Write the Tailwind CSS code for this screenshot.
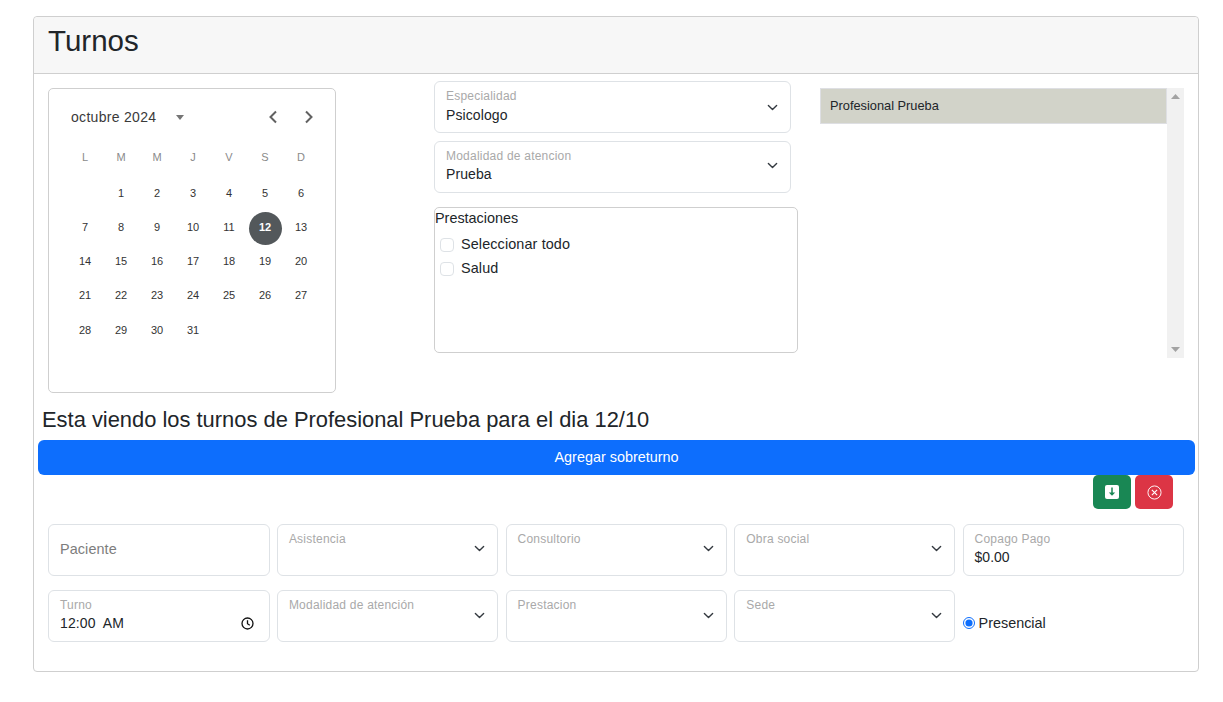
<!DOCTYPE html>
<html lang="es">
<head>
    <meta charset="UTF-8">
    <title>Turnos</title>
    <script src="https://cdn.jsdelivr.net/npm/@tailwindcss/browser@4"></script>
</head>
<body class="bg-white h-[702px] overflow-hidden font-['Liberation_Sans',Arial,sans-serif] text-[#212529]">
    <div class="ml-[33px] mt-[16px] w-[1166px] h-[656px] border border-[#cfcfcf] rounded-[4px]">
        <!-- Cabecera -->
        <div class="h-[57px] bg-[#f7f7f7] border-b border-[#cfcfcf] rounded-t-[4px] pl-[14px] pt-[6px]">
            <h1 class="text-[29.500px] leading-[36px]">Turnos</h1>
        </div>

        <!-- Fila superior -->
        <div class="flex h-[327px]">
            <!-- Calendario -->
            <div class="ml-[14px] mt-[14px] w-[288px] h-[305px] border border-[#cfcfcf] rounded-[5px] pl-[18px] shrink-0">
                <div class="flex items-center h-[18px] mt-[19px] text-[#3a3a3a]">
                    <span class="ml-[4px] text-[14px] tracking-[0.3px] w-[104px]">octubre 2024</span>
                    <svg class="w-[10px] h-[5px]" viewBox="0 0 10 5"><path d="M1 0h8L5 5z" fill="#757575"/></svg>
                    <svg class="ml-[83px] w-[10px] h-[14px]" viewBox="0 0 10 14" fill="none" stroke="#616161" stroke-width="2"><path d="M8 1.500 2.500 7 8 12.500"/></svg>
                    <svg class="ml-[26px] w-[10px] h-[14px]" viewBox="0 0 10 14" fill="none" stroke="#616161" stroke-width="2"><path d="M2 1.500 7.500 7 2 12.500"/></svg>
                </div>
                <div class="grid grid-cols-[repeat(7,36px)] mt-[14px] text-[11px] text-center text-[#333]">
                    <div class="h-[37px] leading-[36px] text-[#8a8a8a] -mt-[1px]">L</div>
                    <div class="h-[37px] leading-[36px] text-[#8a8a8a] -mt-[1px]">M</div>
                    <div class="h-[37px] leading-[36px] text-[#8a8a8a] -mt-[1px]">M</div>
                    <div class="h-[37px] leading-[36px] text-[#8a8a8a] -mt-[1px]">J</div>
                    <div class="h-[37px] leading-[36px] text-[#8a8a8a] -mt-[1px]">V</div>
                    <div class="h-[37px] leading-[36px] text-[#8a8a8a] -mt-[1px]">S</div>
                    <div class="h-[37px] leading-[36px] text-[#8a8a8a] -mt-[1px]">D</div>

                    <div class="h-[34px] leading-[34px]"></div>
                    <div class="h-[34px] leading-[34px]">1</div>
                    <div class="h-[34px] leading-[34px]">2</div>
                    <div class="h-[34px] leading-[34px]">3</div>
                    <div class="h-[34px] leading-[34px]">4</div>
                    <div class="h-[34px] leading-[34px]">5</div>
                    <div class="h-[34px] leading-[34px]">6</div>

                    <div class="h-[34px] leading-[34px]">7</div>
                    <div class="h-[34px] leading-[34px]">8</div>
                    <div class="h-[34px] leading-[34px]">9</div>
                    <div class="h-[34px] leading-[34px]">10</div>
                    <div class="h-[34px] leading-[34px]">11</div>
                    <div class="h-[34px] flex items-center justify-center"><span class="w-[33px] h-[33px] mt-[2px] leading-[31px] rounded-full bg-[#53585b] text-white font-bold">12</span></div>
                    <div class="h-[34px] leading-[34px]">13</div>

                    <div class="h-[34px] leading-[34px]">14</div>
                    <div class="h-[34px] leading-[34px]">15</div>
                    <div class="h-[34px] leading-[34px]">16</div>
                    <div class="h-[34px] leading-[34px]">17</div>
                    <div class="h-[34px] leading-[34px]">18</div>
                    <div class="h-[34px] leading-[34px]">19</div>
                    <div class="h-[34px] leading-[34px]">20</div>

                    <div class="h-[34px] leading-[34px]">21</div>
                    <div class="h-[34px] leading-[34px]">22</div>
                    <div class="h-[34px] leading-[34px]">23</div>
                    <div class="h-[34px] leading-[34px]">24</div>
                    <div class="h-[34px] leading-[34px]">25</div>
                    <div class="h-[34px] leading-[34px]">26</div>
                    <div class="h-[34px] leading-[34px]">27</div>

                    <div class="h-[36px] leading-[36px]">28</div>
                    <div class="h-[36px] leading-[36px]">29</div>
                    <div class="h-[36px] leading-[36px]">30</div>
                    <div class="h-[36px] leading-[36px]">31</div>
                </div>
            </div>

            <!-- Filtros -->
            <div class="ml-[98px] mt-[7px] w-[364px] shrink-0">
                <div class="relative w-[357px] h-[52px] border border-[#dee2e6] rounded-[6px] pl-[11px] pt-[7px]">
                    <div class="text-[12px] leading-[14px] tracking-[0.22px] text-[#a9a9a9]">Especialidad</div>
                    <div class="text-[14px] leading-[20px] mt-[2px] tracking-[0.1px]">Psicologo</div>
                    <svg class="absolute right-[12px] top-[20px] w-[11px] h-[11px]" viewBox="0 0 16 16" fill="none" stroke="#343a40" stroke-width="2" stroke-linecap="round" stroke-linejoin="round"><path d="m2 5 6 6 6-6"/></svg>
                </div>
                <div class="relative w-[357px] h-[52px] mt-[8px] border border-[#dee2e6] rounded-[6px] pl-[11px] pt-[7px]">
                    <div class="text-[12px] leading-[14px] tracking-[0.22px] text-[#a9a9a9]">Modalidad de atencion</div>
                    <div class="text-[14px] leading-[20px] mt-[1px] tracking-[0.1px]">Prueba</div>
                    <svg class="absolute right-[12px] top-[18px] w-[11px] h-[11px]" viewBox="0 0 16 16" fill="none" stroke="#343a40" stroke-width="2" stroke-linecap="round" stroke-linejoin="round"><path d="m2 5 6 6 6-6"/></svg>
                </div>
                <div class="w-[364px] h-[146px] mt-[14px] border border-[#cfcfcf] rounded-[5px] text-[14.400px]">
                    <div class="leading-[20px]">Prestaciones</div>
                    <div class="flex items-center h-[24px] mt-[5px] pl-[5px]">
                        <span class="w-[14px] h-[14px] -mt-[1px] border border-[#dee2e6] rounded-[4px]"></span>
                        <span class="ml-[7px] tracking-[0.12px]">Seleccionar todo</span>
                    </div>
                    <div class="flex items-center h-[24px] pl-[5px]">
                        <span class="w-[14px] h-[14px] -mt-[1px] border border-[#dee2e6] rounded-[4px]"></span>
                        <span class="ml-[7px] tracking-[0.12px]">Salud</span>
                    </div>
                </div>
            </div>

            <!-- Lista de profesionales -->
            <div class="ml-[22px] mt-[14px] w-[364px] h-[270px] flex shrink-0">
                <div class="flex-1">
                    <div class="h-[36px] bg-[#d2d3c9] border border-[#dedfe3] pl-[9px] text-[12.800px] leading-[34px]">Profesional Prueba</div>
                </div>
                <div class="relative w-[17px] bg-[#f1f1f1]">
                    <svg class="absolute left-[4px] top-[6px] w-[9px] h-[5px]" viewBox="0 0 9 5"><path d="M0 5 4.500 0 9 5z" fill="#a3a3a3"/></svg>
                    <svg class="absolute left-[4px] bottom-[6px] w-[9px] h-[5px]" viewBox="0 0 9 5"><path d="M0 0h9L4.500 5z" fill="#a3a3a3"/></svg>
                </div>
            </div>
        </div>

        <!-- Turnos del dia -->
        <h2 class="pl-[8px] mt-[6px] h-[30px] text-[21.900px] leading-[26px]">Esta viendo los turnos de Profesional Prueba para el dia 12/10</h2>
        <div class="ml-[4px] mt-[3px] w-[1157px] h-[35px] bg-[#0d6efd] rounded-[6px] text-white text-[14.400px] leading-[35px] text-center">Agregar sobreturno</div>

        <div class="flex justify-end gap-[4px] pr-[25px]">
            <div class="w-[38px] h-[34px] bg-[#198754] rounded-[5px] flex items-center justify-center">
                <svg class="w-[14px] h-[14px]" viewBox="0 0 14 14"><rect width="14" height="14" rx="2" fill="#fff"/><path d="M7 2.500v7" stroke="#198754" stroke-width="1.500"/><path d="M3.800 7.500h6.400L7 10.800z" fill="#198754"/></svg>
            </div>
            <div class="w-[38px] h-[34px] bg-[#dc3545] rounded-[5px] flex items-center justify-center">
                <svg class="w-[15px] h-[15px]" viewBox="0 0 16 16" fill="none" stroke="#fff" stroke-width="1"><circle cx="8" cy="8" r="7"/><path d="m5.200 5.200 5.600 5.600m0-5.600-5.600 5.600" stroke-width="1.200"/></svg>
            </div>
        </div>

        <!-- Formulario -->
        <div class="grid grid-cols-[221.600px_221.400px_221.400px_221px_221.400px] gap-x-[7.300px] gap-y-[14px] ml-[14px] mt-[15px]">
            <div class="h-[52px] border border-[#dee2e6] rounded-[6px] pl-[11px] text-[14.400px] tracking-[0.1px] leading-[49px] text-[#7d7d7d]">Paciente</div>
            <div class="relative h-[52px] border border-[#dee2e6] rounded-[6px] pl-[11px] pt-[7px]">
                <div class="text-[12px] leading-[14px] tracking-[0.22px] text-[#a9a9a9]">Asistencia</div>
                <svg class="absolute right-[12px] top-[18px] w-[11px] h-[11px]" viewBox="0 0 16 16" fill="none" stroke="#343a40" stroke-width="2" stroke-linecap="round" stroke-linejoin="round"><path d="m2 5 6 6 6-6"/></svg>
            </div>
            <div class="relative h-[52px] border border-[#dee2e6] rounded-[6px] pl-[11px] pt-[7px]">
                <div class="text-[12px] leading-[14px] tracking-[0.22px] text-[#a9a9a9]">Consultorio</div>
                <svg class="absolute right-[12px] top-[18px] w-[11px] h-[11px]" viewBox="0 0 16 16" fill="none" stroke="#343a40" stroke-width="2" stroke-linecap="round" stroke-linejoin="round"><path d="m2 5 6 6 6-6"/></svg>
            </div>
            <div class="relative h-[52px] border border-[#dee2e6] rounded-[6px] pl-[11px] pt-[7px]">
                <div class="text-[12px] leading-[14px] tracking-[0.22px] text-[#a9a9a9]">Obra social</div>
                <svg class="absolute right-[12px] top-[18px] w-[11px] h-[11px]" viewBox="0 0 16 16" fill="none" stroke="#343a40" stroke-width="2" stroke-linecap="round" stroke-linejoin="round"><path d="m2 5 6 6 6-6"/></svg>
            </div>
            <div class="h-[52px] border border-[#dee2e6] rounded-[6px] pl-[11px] pt-[7px]">
                <div class="text-[12px] leading-[14px] tracking-[0.22px] text-[#a9a9a9]">Copago Pago</div>
                <div class="text-[14px] leading-[20px] mt-[1px]">$0.00</div>
            </div>

            <div class="relative h-[52px] border border-[#dee2e6] rounded-[6px] pl-[11px] pt-[7px]">
                <div class="text-[12px] leading-[14px] tracking-[0.22px] text-[#a9a9a9]">Turno</div>
                <div class="text-[14px] leading-[20px] mt-[1px] tracking-[0.1px] whitespace-pre">12:00  AM</div>
                <svg class="absolute right-[15px] top-[26px] w-[13px] h-[13px]" viewBox="0 0 13 13" fill="none" stroke="#111" stroke-width="1.300"><circle cx="6.500" cy="6.500" r="5.500"/><path d="M6.500 3.200v3.500l2.300 1.500"/></svg>
            </div>
            <div class="relative h-[52px] border border-[#dee2e6] rounded-[6px] pl-[11px] pt-[7px]">
                <div class="text-[12px] leading-[14px] tracking-[0.22px] text-[#a9a9a9]">Modalidad de atención</div>
                <svg class="absolute right-[12px] top-[19px] w-[11px] h-[11px]" viewBox="0 0 16 16" fill="none" stroke="#343a40" stroke-width="2" stroke-linecap="round" stroke-linejoin="round"><path d="m2 5 6 6 6-6"/></svg>
            </div>
            <div class="relative h-[52px] border border-[#dee2e6] rounded-[6px] pl-[11px] pt-[7px]">
                <div class="text-[12px] leading-[14px] tracking-[0.22px] text-[#a9a9a9]">Prestacion</div>
                <svg class="absolute right-[12px] top-[19px] w-[11px] h-[11px]" viewBox="0 0 16 16" fill="none" stroke="#343a40" stroke-width="2" stroke-linecap="round" stroke-linejoin="round"><path d="m2 5 6 6 6-6"/></svg>
            </div>
            <div class="relative h-[52px] border border-[#dee2e6] rounded-[6px] pl-[11px] pt-[7px]">
                <div class="text-[12px] leading-[14px] tracking-[0.22px] text-[#a9a9a9]">Sede</div>
                <svg class="absolute right-[12px] top-[19px] w-[11px] h-[11px]" viewBox="0 0 16 16" fill="none" stroke="#343a40" stroke-width="2" stroke-linecap="round" stroke-linejoin="round"><path d="m2 5 6 6 6-6"/></svg>
            </div>
            <div class="flex items-center h-[52px] pt-[16px] text-[14.400px]">
                <input type="radio" checked class="w-[12px] h-[12px] m-0 mb-[2px] accent-[#0d6efd]">
                <span class="ml-[4px]">Presencial</span>
            </div>
        </div>
    </div>
</body>
</html>
